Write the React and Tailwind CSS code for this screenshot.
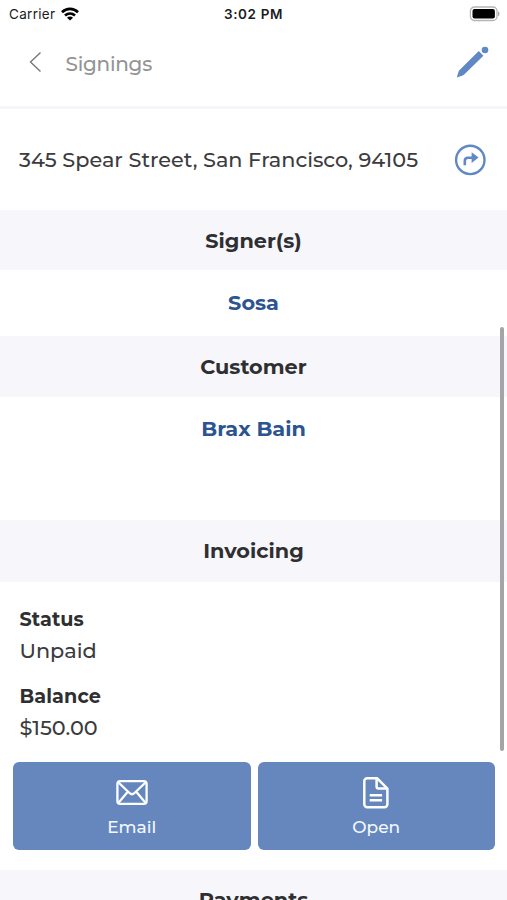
const StatusBar = () => (
  <div className="flex h-7 shrink-0 items-center px-[9px] font-['Inter',sans-serif] text-[13.5px] text-[#1c1c1e]">
    <div className="flex flex-1 items-center gap-1.5">
      <span className="tracking-[0.3px]">Carrier</span>
      <svg width="18" height="14" viewBox="0 0 18 14" fill="none" stroke="#000" strokeWidth="2.7">
        <path d="M1 5.2C5.6.7 12.4.7 17 5.2" />
        <path d="M4 8.6c3-2.8 7-2.8 10 0" />
        <path d="M9 13.6 6 10.8c1.7-1.6 4.3-1.6 6 0z" fill="#000" stroke="none" />
      </svg>
    </div>
    <span className="font-semibold tracking-[0.6px]">3:02 PM</span>
    <div className="flex flex-1 justify-end">
      <svg className="-mr-0.5" width="31" height="16" viewBox="0 0 31 16">
        <rect x="1.4" y="1" width="26.6" height="13.5" rx="4" fill="#fff" stroke="#b5b5b5" strokeWidth="1.3" />
        <rect x="3.5" y="3" width="22.4" height="9.5" rx="2" fill="#000" />
        <path d="M29 5.3c2 .8 2 4.1 0 4.9z" fill="#aaa" />
      </svg>
    </div>
  </div>
);

const Header = () => (
  <header className="flex h-[81px] shrink-0 items-start border-b-[3px] border-[#f6f6fa] pl-7 pr-[18px] pt-[17px]">
    <svg className="mt-[6px]" width="15" height="22" viewBox="0 0 15 22" fill="none" stroke="#77777f" strokeWidth="1.4">
      <path d="M12.5 1.5 2.5 11l10 9.5" />
    </svg>
    <span className="ml-[22.5px] flex-1 text-[20px] font-medium leading-[38px] tracking-[-0.25px] text-[#949494]">Signings</span>
    <svg className="mt-[1px]" width="33" height="33" viewBox="0 0 33 33" fill="#5f88c4">
      <path d="M.8 31.5 2.6 25.4Q2.9 24.6 3.6 23.9L22.8 5.1l4.6 4.6L8.2 28.6Q7.5 29.3 6.7 29.6z" />
      <circle cx="29" cy="4" r="3.3" />
    </svg>
  </header>
);

const SectionTitle = ({ children, className }) => (
  <h2 className={`flex shrink-0 items-center justify-center bg-[#f6f6fb] text-[20.8px] font-bold text-[#2f2f31] ${className}`}>
    {children}
  </h2>
);

const ActionButton = ({ label, icon }) => (
  <button className="flex h-[88px] flex-1 flex-col items-center rounded-[6px] bg-[#6587bd] pt-[13px] text-[17px] font-medium leading-6 text-[#f4f8ff]">
    {icon}
    <span className="mt-[6px]">{label}</span>
  </button>
);

const MailIcon = () => (
  <svg width="34" height="34" viewBox="0 0 34 34" fill="none" stroke="#fff" strokeWidth="2.3" strokeLinejoin="round">
    <rect x="2.4" y="6.2" width="29.2" height="22.6" rx="2.8" />
    <path d="m3.5 7.5 11 10.5c1.6 1.5 3.4 1.5 5 0l11-10.5M3.5 27.8l9.3-11M30.5 27.8l-9.3-11" />
  </svg>
);

const DocumentIcon = () => (
  <svg width="34" height="34" viewBox="0 0 34 34" fill="none" stroke="#fff" strokeWidth="2.5" strokeLinejoin="round">
    <path d="M8.2 3.2h9.8L28.4 13.6v15.7a2.9 2.9 0 0 1-2.9 2.9H8.2a2.9 2.9 0 0 1-2.9-2.9V6.1a2.9 2.9 0 0 1 2.9-2.9z" />
    <path d="M17.6 3.5v8.3c0 1.2.6 1.8 1.8 1.8h8.5M10.7 20.2h12.4M10.7 25.3h12.4" />
  </svg>
);

export default function App() {
  return (
    <div className="relative flex h-[900px] w-[507px] flex-col overflow-hidden bg-white font-['Montserrat','Inter',sans-serif] text-[20.8px] text-[#3c3c3e]">
      <StatusBar />
      <Header />

      <div className="flex h-[101px] shrink-0 items-center justify-between pl-[19px] pr-5">
        <span className="whitespace-nowrap font-medium tracking-[0.01px]">345 Spear Street, San Francisco, 94105</span>
        <svg width="33" height="33" viewBox="0 0 33 33" fill="none" stroke="#5f88c4" strokeWidth="2.4">
          <circle cx="16.3" cy="16.9" r="14.2" />
          <path d="M10.8 22.3v-4.4c0-2.2 1-3.2 3.2-3.2h5" strokeWidth="2.6" />
          <path d="M17.6 9.2v10.8l7-5.4z" fill="#5f88c4" stroke="none" />
        </svg>
      </div>

      <SectionTitle className="h-[60px] pt-[2px]">Signer(s)</SectionTitle>
      <div className="flex h-[66px] shrink-0 items-center justify-center font-bold text-[#2c5490]">
        Sosa
      </div>

      <SectionTitle className="h-[61px]">Customer</SectionTitle>
      <div className="flex h-[123px] shrink-0 justify-center pt-[17px] font-bold leading-[30px] text-[#2c5490]">
        Brax Bain
      </div>

      <SectionTitle className="h-[62px]">Invoicing</SectionTitle>
      <dl className="h-[180px] shrink-0 px-[19.5px] pt-[21px] leading-8">
        <dt className="text-[19.2px] font-bold tracking-[0.1px] text-[#2f2f31]">Status</dt>
        <dd className="font-medium">Unpaid</dd>
        <dt className="mt-[12.5px] text-[19.2px] font-bold tracking-[0.1px] text-[#2f2f31]">Balance</dt>
        <dd className="font-medium">$150.00</dd>
      </dl>

      <div className="flex shrink-0 gap-[7px] pl-[13px] pr-3">
        <ActionButton label="Email" icon={<MailIcon />} />
        <ActionButton label="Open" icon={<DocumentIcon />} />
      </div>

      <SectionTitle className="mt-5 h-[60px]">Payments</SectionTitle>

      {/* scroll indicator */}
      <div className="absolute right-[3px] top-[327px] h-[424px] w-[4px] rounded-full bg-[#a5a5a7]" />
    </div>
  );
}
